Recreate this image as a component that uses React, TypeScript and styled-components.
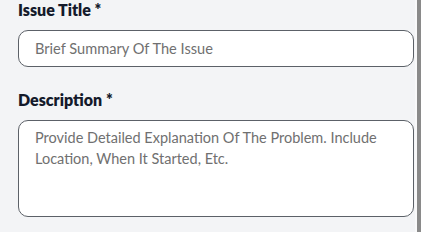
import React from 'react'
import styled, { createGlobalStyle } from 'styled-components'

const GlobalStyle = createGlobalStyle`
  html, body {
    margin: 0;
    padding: 0;
    background: #f3f4f6;
  }
  * { box-sizing: border-box; }
`

const Frame = styled.div`
  display: flex;
  width: 421px;
  height: 232px;
  overflow: hidden;
`

const Panel = styled.div`
  flex: 1;
  background: #f3f4f6;
  padding: 0 1px 0 18px;
  display: flex;
  flex-direction: column;
  font-family: Lato, "Noto Sans", sans-serif;
`

const Gutter = styled.div`
  width: 2px;
  background: #f9f9fa;
`

const ScrollStrip = styled.div`
  width: 4px;
  background: #8a8a8a;
`

const Field = styled.div`
  display: flex;
  flex-direction: column;
  gap: 10px;
  & + & {
    margin-top: 23px;
  }
`

const Label = styled.label`
  font-size: 16px;
  line-height: 20px;
  font-weight: 800;
  color: #141a2b;
`

const TextInput = styled.input`
  height: 37px;
  width: 100%;
  border: 1px solid #5c6168;
  border-radius: 10px;
  background: #fff;
  padding: 0 16px;
  font-family: inherit;
  font-size: 14.6px;
  color: #333;
  outline: none;
  &::placeholder {
    color: #707070;
  }
`

const TextArea = styled.textarea`
  height: 97px;
  width: 100%;
  border: 1px solid #5c6168;
  border-radius: 10px;
  background: #fff;
  padding: 6px 16px;
  font-family: inherit;
  font-size: 14.5px;
  line-height: 21px;
  color: #333;
  resize: none;
  outline: none;
  display: block;
  &::placeholder {
    color: #707070;
  }
`

export default function App() {
  return (
    <Frame>
      <GlobalStyle />
      <Panel>
        <Field>
          <Label>Issue Title *</Label>
          <TextInput placeholder="Brief Summary Of The Issue" />
        </Field>
        <Field>
          <Label>Description *</Label>
          <TextArea placeholder="Provide Detailed Explanation Of The Problem. Include Location, When It Started, Etc." />
        </Field>
      </Panel>
      <Gutter />
      <ScrollStrip />
    </Frame>
  )
}
